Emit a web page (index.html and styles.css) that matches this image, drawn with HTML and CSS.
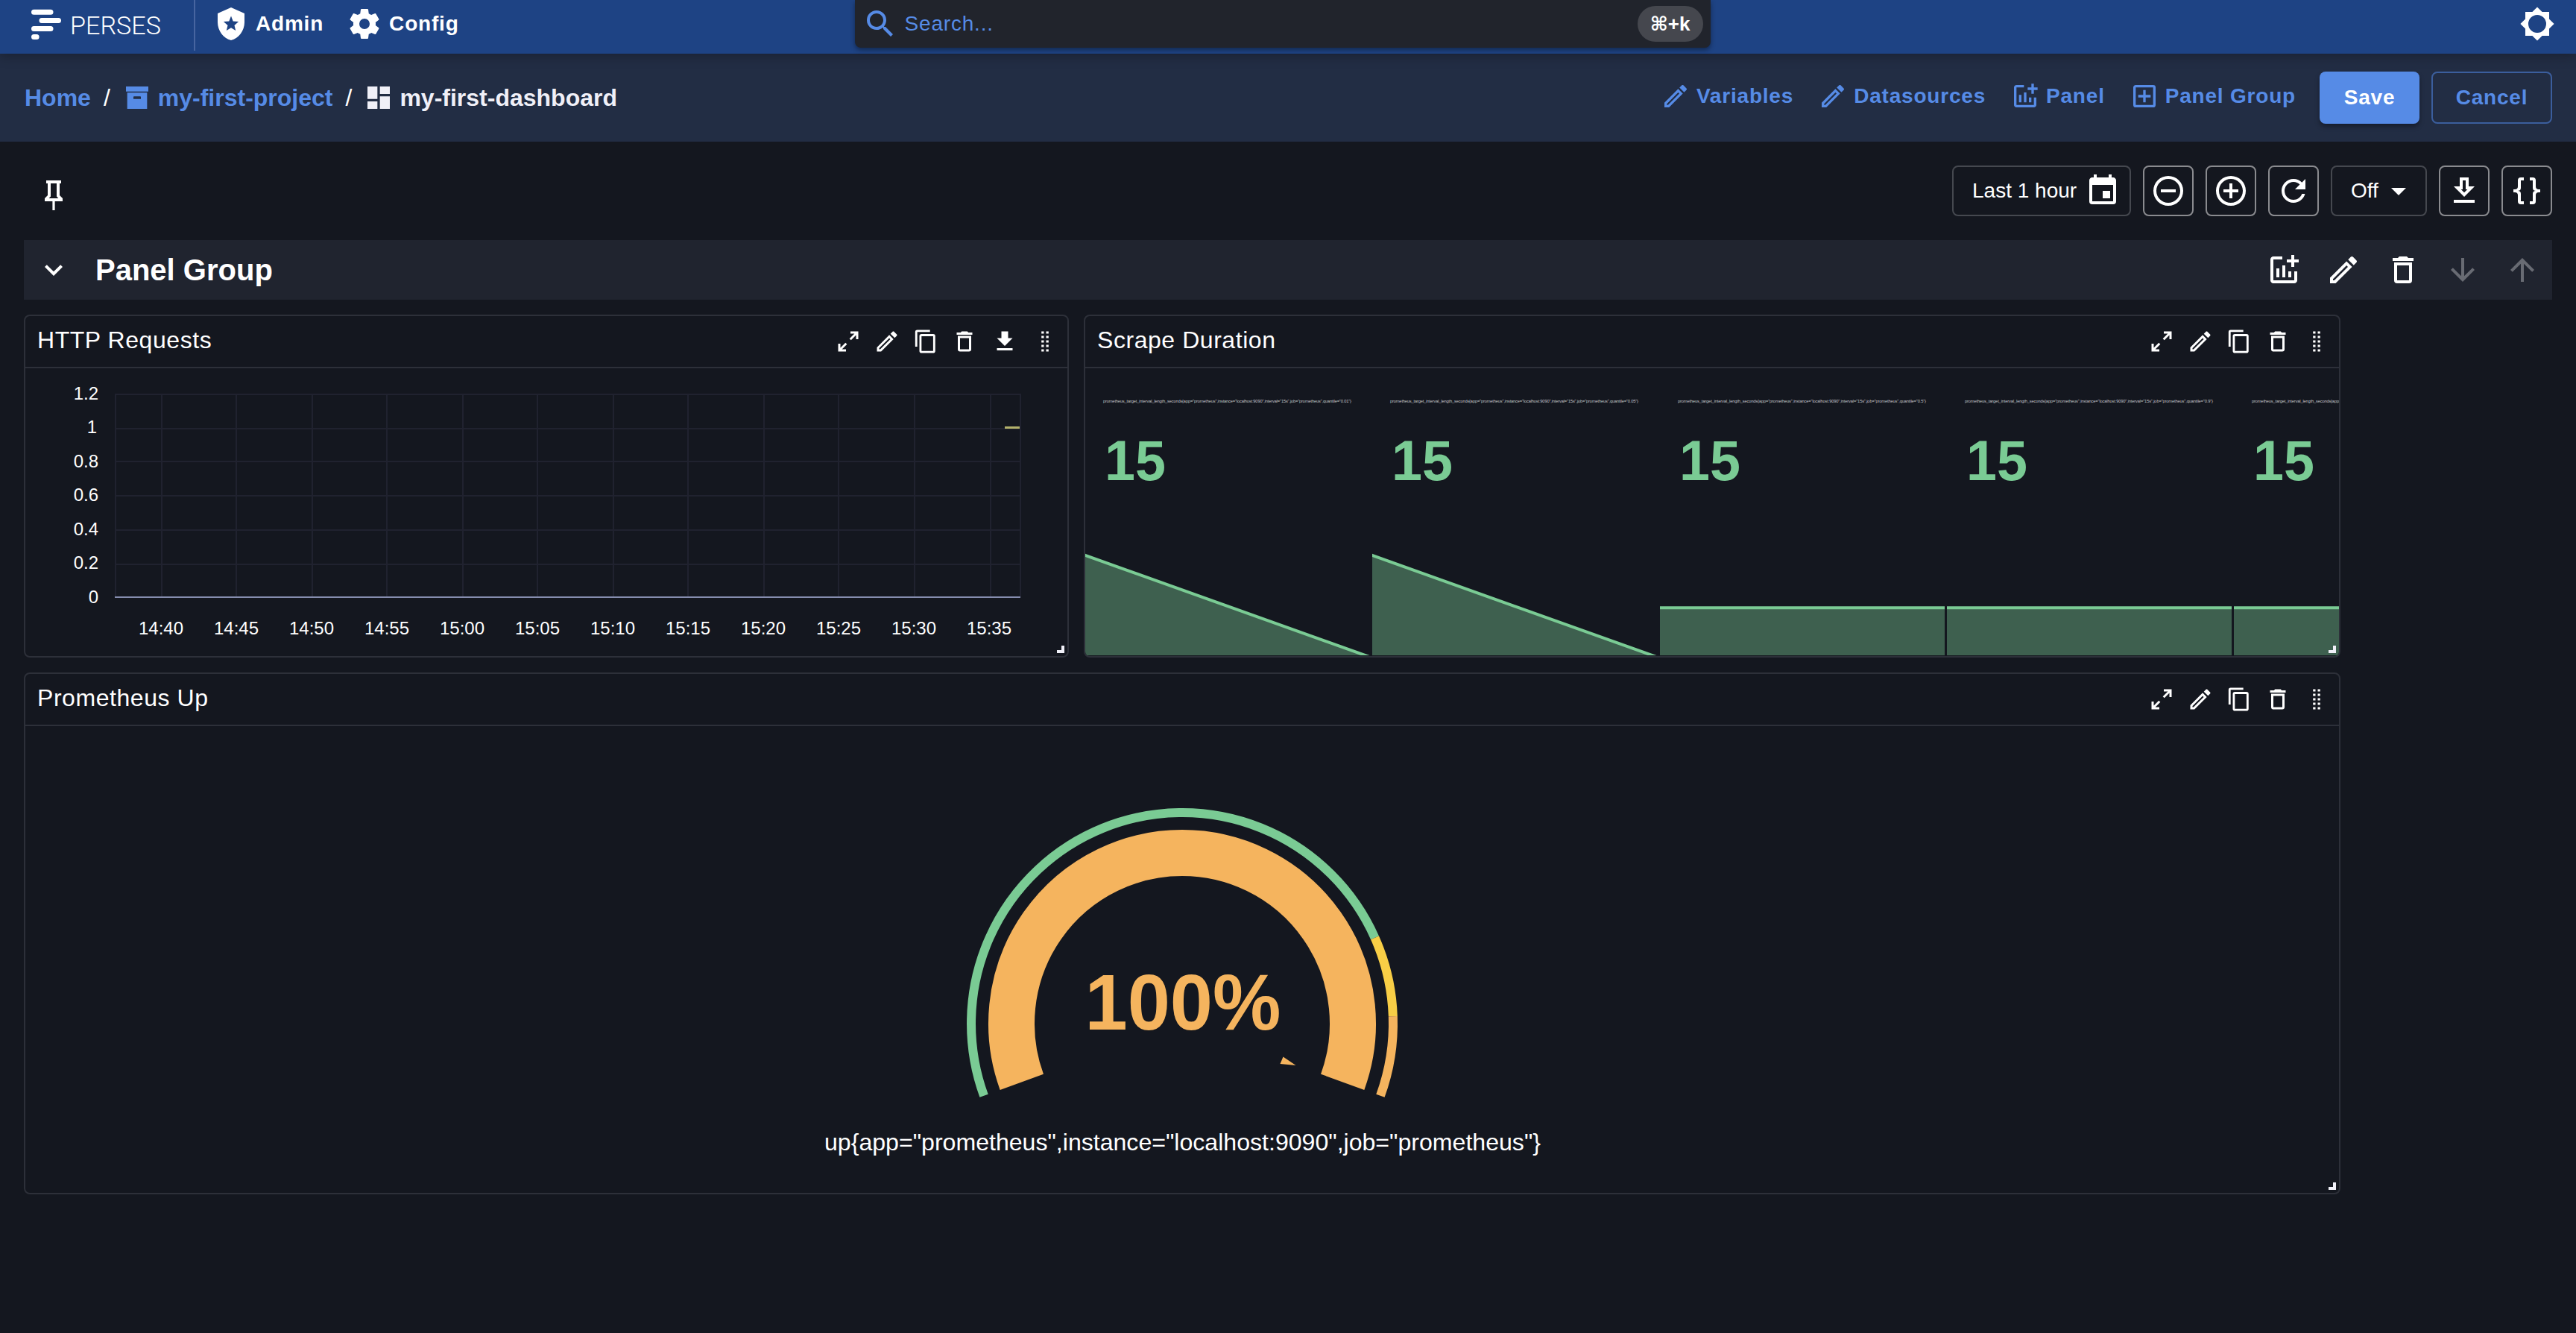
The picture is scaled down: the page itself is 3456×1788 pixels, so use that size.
FILE: index.html
```html
<!DOCTYPE html>
<html lang="en">
<head>
<meta charset="utf-8">
<title>my-first-dashboard</title>
<link rel="stylesheet" href="styles.css">
</head>
<body>
<svg class="defs" width="0" height="0" aria-hidden="true">
  <symbol id="i-shield" viewBox="0 0 24 24"><path fill-rule="evenodd" d="M12 1 3 5v6c0 5.55 3.84 10.74 9 12 5.16-1.26 9-6.45 9-12V5zM12 6.700l1.350 3.550 3.700.3-2.800 2.400.85 3.600L12 14.600 8.900 16.550l.85-3.600-2.800-2.400 3.700-.3z"/></symbol>
  <symbol id="i-gear" viewBox="0 0 24 24"><path d="M12,15.5A3.5,3.5 0 0,1 8.5,12A3.5,3.5 0 0,1 12,8.5A3.5,3.5 0 0,1 15.5,12A3.5,3.5 0 0,1 12,15.5M19.43,12.97C19.47,12.65 19.5,12.33 19.5,12C19.5,11.67 19.47,11.34 19.43,11L21.54,9.37C21.73,9.22 21.78,8.95 21.66,8.73L19.66,5.27C19.54,5.05 19.27,4.96 19.05,5.05L16.56,6.05C16.04,5.66 15.5,5.32 14.87,5.07L14.5,2.42C14.46,2.18 14.25,2 14,2H10C9.75,2 9.54,2.18 9.5,2.42L9.13,5.07C8.5,5.32 7.96,5.66 7.44,6.05L4.95,5.05C4.73,4.96 4.46,5.05 4.34,5.27L2.34,8.73C2.21,8.95 2.27,9.22 2.46,9.37L4.57,11C4.53,11.34 4.5,11.67 4.5,12C4.5,12.33 4.53,12.65 4.57,12.97L2.46,14.63C2.27,14.78 2.21,15.05 2.34,15.27L4.34,18.73C4.46,18.95 4.73,19.03 4.95,18.95L7.44,17.94C7.96,18.34 8.5,18.68 9.13,18.93L9.5,21.58C9.54,21.82 9.75,22 10,22H14C14.25,22 14.46,21.82 14.5,21.58L14.87,18.93C15.5,18.67 16.04,18.34 16.56,17.94L19.05,18.95C19.27,19.03 19.54,18.95 19.66,18.73L21.66,15.27C21.78,15.05 21.73,14.78 21.54,14.63L19.43,12.97Z"/></symbol>
  <symbol id="i-search" viewBox="0 0 24 24"><path d="M9.5,3A6.5,6.5 0 0,1 16,9.5C16,11.11 15.41,12.59 14.44,13.73L14.71,14H15.5L20.5,19L19,20.5L14,15.5V14.71L13.73,14.44C12.59,15.41 11.11,16 9.5,16A6.5,6.5 0 0,1 3,9.5A6.5,6.5 0 0,1 9.5,3M9.5,5C7,5 5,7 5,9.5C5,12 7,14 9.5,14C12,14 14,12 14,9.5C14,7 12,5 9.5,5Z"/></symbol>
  <symbol id="i-sun" viewBox="0 0 24 24"><path d="M12,18A6,6 0 0,1 6,12A6,6 0 0,1 12,6A6,6 0 0,1 18,12A6,6 0 0,1 12,18M20,15.31L23.31,12L20,8.69V4H15.31L12,0.69L8.69,4H4V8.69L0.69,12L4,15.31V20H8.69L12,23.31L15.31,20H20V15.31Z"/></symbol>
  <symbol id="i-archive" viewBox="0 0 24 24"><path d="M3,3H21V7H3V3M4,8H20V21H4V8M9.5,11A0.5,0.5 0 0,0 9,11.5V13H15V11.5A0.5,0.5 0 0,0 14.5,11H9.5Z"/></symbol>
  <symbol id="i-board" viewBox="0 0 24 24"><path d="M13,3V9H21V3M13,21H21V11H13M3,21H11V15H3M3,13H11V3H3V13Z"/></symbol>
  <symbol id="i-pencil" viewBox="0 0 24 24"><path d="M14.06,9L15,9.94L5.92,19H5V18.08L14.06,9M17.66,3C17.41,3 17.15,3.1 16.96,3.29L15.13,5.12L18.88,8.87L20.71,7.04C21.1,6.65 21.1,6 20.71,5.63L18.37,3.29C18.17,3.09 17.92,3 17.66,3M14.06,6.19L3,17.25V21H6.75L17.81,9.94L14.06,6.19Z"/></symbol>
  <symbol id="i-addchart" viewBox="0 0 24 24"><path d="M22 5v2h-3v3h-2V7h-3V5h3V2h2v3zm-3 14H5V5h6V3H5c-1.1 0-2 .9-2 2v14c0 1.1.9 2 2 2h14c1.1 0 2-.9 2-2v-6h-2zm-4-6v4h2v-4zm-4 4h2V9h-2zm-2 0v-6H7v6z"/></symbol>
  <symbol id="i-plusbox" viewBox="0 0 24 24"><path d="M19,19V5H5V19H19M19,3A2,2 0 0,1 21,5V19A2,2 0 0,1 19,21H5A2,2 0 0,1 3,19V5C3,3.89 3.9,3 5,3H19M11,7H13V11H17V13H13V17H11V13H7V11H11V7Z"/></symbol>
  <symbol id="i-calendar" viewBox="0 0 24 24"><path d="M19,19H5V8H19M16,1V3H8V1H6V3H5C3.89,3 3,3.89 3,5V19A2,2 0 0,0 5,21H19A2,2 0 0,0 21,19V5C21,3.89 20.1,3 19,3H18V1M17,12H12V17H17V12Z"/></symbol>
  <symbol id="i-minus" viewBox="0 0 24 24"><path d="M12,20C7.59,20 4,16.41 4,12C4,7.59 7.59,4 12,4C16.41,4 20,7.59 20,12C20,16.41 16.41,20 12,20M12,2A10,10 0 0,0 2,12A10,10 0 0,0 12,22A10,10 0 0,0 22,12A10,10 0 0,0 12,2M7,13H17V11H7"/></symbol>
  <symbol id="i-plus" viewBox="0 0 24 24"><path d="M12,20C7.59,20 4,16.41 4,12C4,7.59 7.59,4 12,4C16.41,4 20,7.59 20,12C20,16.41 16.41,20 12,20M12,2A10,10 0 0,0 2,12A10,10 0 0,0 12,22A10,10 0 0,0 22,12A10,10 0 0,0 12,2M13,7H11V11H7V13H11V17H13V13H17V11H13V7Z"/></symbol>
  <symbol id="i-refresh" viewBox="0 0 24 24"><path d="M17.65,6.35C16.2,4.9 14.21,4 12,4A8,8 0 0,0 4,12A8,8 0 0,0 12,20C15.73,20 18.84,17.45 19.73,14H17.65C16.83,16.33 14.61,18 12,18A6,6 0 0,1 6,12A6,6 0 0,1 12,6C13.66,6 15.14,6.69 16.22,7.78L13,11H20V4L17.65,6.35Z"/></symbol>
  <symbol id="i-caret" viewBox="0 0 24 24"><path d="M7,10L12,15L17,10H7Z"/></symbol>
  <symbol id="i-dl-outline" viewBox="0 0 24 24"><path d="M13,5V11H14.17L12,13.17L9.83,11H11V5H13M15,3H9V9H5L12,16L19,9H15V3M19,18H5V20H19V18Z"/></symbol>
  <symbol id="i-braces" viewBox="0 0 24 24"><path d="M8,3A2,2 0 0,0 6,5V9A2,2 0 0,1 4,11H3V13H4A2,2 0 0,1 6,15V19A2,2 0 0,0 8,21H10V19H8V14A2,2 0 0,0 6,12A2,2 0 0,0 8,10V5H10V3M16,3A2,2 0 0,1 18,5V9A2,2 0 0,0 20,11H21V13H20A2,2 0 0,0 18,15V19A2,2 0 0,1 16,21H14V19H16V14A2,2 0 0,1 18,12A2,2 0 0,1 16,10V5H14V3H16Z"/></symbol>
  <symbol id="i-pin" viewBox="0 0 24 24"><path d="M16,12V4H17V2H7V4H8V12L6,14V16H11.2V22H12.8V16H18V14L16,12M8.8,14L10,12.8V4H14V12.8L15.2,14H8.8Z"/></symbol>
  <symbol id="i-chevron" viewBox="0 0 24 24"><path d="M7.41,8.58L12,13.17L16.59,8.58L18,10L12,16L6,10L7.41,8.58Z"/></symbol>
  <symbol id="i-trash" viewBox="0 0 24 24"><path d="M6,19A2,2 0 0,0 8,21H16A2,2 0 0,0 18,19V7H6V19M8,9H16V19H8V9M15.5,4L14.5,3H9.5L8.5,4H5V6H19V4H15.5Z"/></symbol>
  <symbol id="i-down" viewBox="0 0 24 24"><path d="m20 12-1.41-1.41L13 16.17V4h-2v12.17l-5.58-5.59L4 12l8 8z"/></symbol>
  <symbol id="i-up" viewBox="0 0 24 24"><path d="m4 12 1.41 1.41L11 7.83V20h2V7.83l5.58 5.59L20 12l-8-8z"/></symbol>
  <symbol id="i-expand" viewBox="0 0 24 24"><path d="M10,21V19H6.41L10.91,14.5L9.5,13.09L5,17.59V14H3V21H10M14.5,10.91L19,6.41V10H21V3H14V5H17.59L13.09,9.5L14.5,10.91Z"/></symbol>
  <symbol id="i-copy" viewBox="0 0 24 24"><path d="M19,21H8V7H19M19,5H8A2,2 0 0,0 6,7V21A2,2 0 0,0 8,23H19A2,2 0 0,0 21,21V7A2,2 0 0,0 19,5M16,1H4A2,2 0 0,0 2,3V17H4V3H16V1Z"/></symbol>
  <symbol id="i-dl" viewBox="0 0 24 24"><path d="M5,20H19V18H5M19,9H15V3H9V9H5L12,16L19,9Z"/></symbol>
  <symbol id="i-drag" viewBox="0 0 24 24"><path d="M8.8 3h2.2v2H8.800zM13 3h2.2v2h-2.2zM8.800 7h2.2v2H8.800zM13 7h2.2v2h-2.2zM8.800 11h2.2v2H8.800zM13 11h2.2v2h-2.2zM8.800 15h2.2v2H8.800zM13 15h2.2v2h-2.2zM8.800 19h2.2v2H8.800zM13 19h2.2v2h-2.2z"/></symbol>
</svg>

<header class="nav">
  <div class="brand">
    <svg width="42" height="42" viewBox="0 0 42 42"><path class="mark" d="M4.500 4.300h22.500M15 15.600h22.500M4.500 26.600h22.500M4.500 37.500h3.600"/></svg>
    <svg class="wordmark" width="124" height="42" viewBox="0 0 124 42"><text x="-2" y="34" textLength="122" lengthAdjust="spacingAndGlyphs">PERSES</text></svg>
  </div>
  <a class="nav-link admin"><svg class="i48"><use href="#i-shield"/></svg><span>Admin</span></a>
  <a class="nav-link"><svg class="i48"><use href="#i-gear"/></svg><span>Config</span></a>
  <div class="search"><svg class="i48"><use href="#i-search"/></svg><span class="ph">Search...</span><span class="chip">⌘+k</span></div>
  <svg class="i48 theme"><use href="#i-sun"/></svg>
</header>

<div class="toolbar">
  <nav class="crumbs">
    <a>Home</a><i>/</i>
    <a><svg class="i40"><use href="#i-archive"/></svg><span>my-first-project</span></a><i>/</i>
    <b><svg class="i40"><use href="#i-board"/></svg><span>my-first-dashboard</span></b>
  </nav>
  <div class="actions">
    <a><svg class="i40"><use href="#i-pencil"/></svg>Variables</a>
    <a><svg class="i40"><use href="#i-pencil"/></svg>Datasources</a>
    <a><svg class="i40"><use href="#i-addchart"/></svg>Panel</a>
    <a><svg class="i40"><use href="#i-plusbox"/></svg>Panel Group</a>
  </div>
  <button class="save">Save</button>
  <button class="cancel">Cancel</button>
</div>

<main>
  <div class="controls">
    <svg class="i48 pin"><use href="#i-pin"/></svg>
    <div class="select time"><span>Last 1 hour</span><svg class="i48"><use href="#i-calendar"/></svg></div>
    <button class="sq"><svg class="i48"><use href="#i-minus"/></svg></button>
    <button class="sq"><svg class="i48"><use href="#i-plus"/></svg></button>
    <button class="sq"><svg class="i48"><use href="#i-refresh"/></svg></button>
    <div class="select off"><span>Off</span><svg class="i48"><use href="#i-caret"/></svg></div>
    <button class="sq"><svg class="i48"><use href="#i-dl-outline"/></svg></button>
    <button class="sq"><svg class="i48"><use href="#i-braces"/></svg></button>
  </div>

  <div class="group">
    <svg class="i48"><use href="#i-chevron"/></svg>
    <h2>Panel Group</h2>
    <div class="group-actions">
      <svg class="i48"><use href="#i-addchart"/></svg>
      <svg class="i48"><use href="#i-pencil"/></svg>
      <svg class="i48"><use href="#i-trash"/></svg>
      <svg class="i48 dim"><use href="#i-down"/></svg>
      <svg class="i48 dim"><use href="#i-up"/></svg>
    </div>
  </div>

  <div class="grid">
    <section class="panel http">
      <header><h3>HTTP Requests</h3><div class="tools"><svg><use href="#i-expand"/></svg><svg><use href="#i-pencil"/></svg><svg class="cp"><use href="#i-copy"/></svg><svg><use href="#i-trash"/></svg><svg class="dl"><use href="#i-dl"/></svg><svg><use href="#i-drag"/></svg></div></header>
      <svg class="body" width="1398" height="386" viewBox="34 494 1398 386">
        <g class="gridlines"><path d="M155 529H1369M155 575H1369M155 619H1369M155 665H1369M155 711H1369M155 757H1369"/><path d="M155 528V800M217 528V800M317 528V800M419 528V800M519 528V800M621 528V800M721 528V800M823 528V800M923 528V800M1025 528V800M1125 528V800M1227 528V800M1329 528V800M1369 528V800"/></g>
        <path class="axis" d="M154 801H1369"/>
        <path d="M1348 573.5H1368" stroke="#b3b16b" stroke-width="3"/>
        <g class="ylab"><text x="132" y="536">1.2</text><text x="130" y="581">1</text><text x="132" y="627">0.8</text><text x="132" y="672">0.6</text><text x="132" y="718">0.4</text><text x="132" y="763">0.2</text><text x="132" y="809">0</text></g>
        <g class="xlab"><text x="216" y="851">14:40</text><text x="317" y="851">14:45</text><text x="418" y="851">14:50</text><text x="519" y="851">14:55</text><text x="620" y="851">15:00</text><text x="721" y="851">15:05</text><text x="822" y="851">15:10</text><text x="923" y="851">15:15</text><text x="1024" y="851">15:20</text><text x="1125" y="851">15:25</text><text x="1226" y="851">15:30</text><text x="1327" y="851">15:35</text></g>
      </svg>
      <span class="grip"></span>
    </section>

    <section class="panel scrape">
      <header><h3>Scrape Duration</h3><div class="tools"><svg><use href="#i-expand"/></svg><svg><use href="#i-pencil"/></svg><svg class="cp"><use href="#i-copy"/></svg><svg><use href="#i-trash"/></svg><svg><use href="#i-drag"/></svg></div></header>
      <div class="stats">
        <svg width="382" height="385" viewBox="0 0 382 385"><text class="lbl" x="24" y="46" textLength="333">prometheus_target_interval_length_seconds{app="prometheus",instance="localhost:9090",interval="15s",job="prometheus",quantile="0.01"}</text><text class="num" x="26" y="150" textLength="82" lengthAdjust="spacingAndGlyphs">15</text><path class="area" d="M0 251 380 387H0z"/><path class="line" d="M-4 249.500 384 388"/></svg>
        <svg width="382" height="385" viewBox="0 0 382 385"><text class="lbl" x="24" y="46" textLength="333">prometheus_target_interval_length_seconds{app="prometheus",instance="localhost:9090",interval="15s",job="prometheus",quantile="0.05"}</text><text class="num" x="26" y="150" textLength="82" lengthAdjust="spacingAndGlyphs">15</text><path class="area" d="M0 251 380 387H0z"/><path class="line" d="M-4 249.500 384 388"/></svg>
        <svg width="382" height="385" viewBox="0 0 382 385"><text class="lbl" x="24" y="46" textLength="333">prometheus_target_interval_length_seconds{app="prometheus",instance="localhost:9090",interval="15s",job="prometheus",quantile="0.5"}</text><text class="num" x="26" y="150" textLength="82" lengthAdjust="spacingAndGlyphs">15</text><path class="area" d="M0 321H382V385H0z"/><path class="line" d="M0 321.200H382"/></svg>
        <svg width="382" height="385" viewBox="0 0 382 385"><text class="lbl" x="24" y="46" textLength="333">prometheus_target_interval_length_seconds{app="prometheus",instance="localhost:9090",interval="15s",job="prometheus",quantile="0.9"}</text><text class="num" x="26" y="150" textLength="82" lengthAdjust="spacingAndGlyphs">15</text><path class="area" d="M0 321H382V385H0z"/><path class="line" d="M0 321.200H382"/></svg>
        <svg width="382" height="385" viewBox="0 0 382 385"><text class="lbl" x="24" y="46" textLength="333">prometheus_target_interval_length_seconds{app="prometheus",instance="localhost:9090",interval="15s",job="prometheus",quantile="0.99"}</text><text class="num" x="26" y="150" textLength="82" lengthAdjust="spacingAndGlyphs">15</text><path class="area" d="M0 321H382V385H0z"/><path class="line" d="M0 321.200H382"/></svg>
      </div>
      <span class="grip"></span>
    </section>

    <section class="panel up">
      <header><h3>Prometheus Up</h3><div class="tools"><svg><use href="#i-expand"/></svg><svg><use href="#i-pencil"/></svg><svg class="cp"><use href="#i-copy"/></svg><svg><use href="#i-trash"/></svg><svg><use href="#i-drag"/></svg></div></header>
      <svg class="body" width="3104" height="626" viewBox="34 974 3104 626">
        <g transform="translate(1586 1373)" fill="none" stroke-width="12">
          <path stroke="#7acb94" d="M-265.930 96.790A283 283 0 0 1 258.530 -115.110"/>
          <path stroke="#f8ce46" d="M258.530 -115.110A283 283 0 0 1 282.830 -9.880"/>
          <path stroke="#f5b45e" d="M282.830 -9.880A283 283 0 0 1 265.930 96.790"/>
          <path stroke="#f5b45e" stroke-width="62" d="M-215.190 78.320A229 229 0 1 1 215.190 78.320"/>
          <path fill="#f5b45e" stroke="none" d="M135.500 44.500 152.500 56 131.500 54z"/>
        </g>
        <text class="pct" x="1587" y="1381" textLength="263" lengthAdjust="spacingAndGlyphs">100%</text>
        <text class="series" x="1106" y="1543" textLength="961" lengthAdjust="spacingAndGlyphs">up{app="prometheus",instance="localhost:9090",job="prometheus"}</text>
      </svg>
      <span class="grip"></span>
    </section>
  </div>
</main>
</body>
</html>
```
FILE: styles.css
```css
* { box-sizing: border-box; }
body {
  margin: 0;
  width: 3456px;
  min-height: 1788px;
  background: #14171f;
  color: #fff;
  font-family: "Liberation Sans", Arial, sans-serif;
  font-size: 28px;
}
svg { fill: currentColor; flex: none; display: block; }
.defs { position: absolute; }
.i48 { width: 48px; height: 48px; }
.i40 { width: 40px; height: 40px; }
button { font: inherit; background: none; color: inherit; padding: 0; margin: 0; }

/* top navigation */
.nav {
  position: relative;
  z-index: 1;
  height: 72px;
  display: flex;
  align-items: flex-start;
  background: #1e4384;
  box-shadow: 0 4px 14px rgba(0, 0, 0, .25);
}
.brand {
  width: 262px;
  height: 68px;
  padding: 12px 0 0 41px;
  display: flex;
  gap: 13px;
  border-right: 2px solid #4765a0;
}
.mark { fill: none; stroke: #fff; stroke-width: 7px; stroke-linecap: round; }
.wordmark text { font-family: Roboto, sans-serif; font-weight: 300; font-size: 33.500px; fill: #fff; }
.wordmark { overflow: visible; }
.nav-link {
  display: flex;
  align-items: center;
  gap: 9px;
  height: 48px;
  margin: 8px 0 0 32px;
  font-weight: 700;
  letter-spacing: .8px;
}
.nav-link.admin { margin-left: 24px; }
.nav-link:not(.admin) { margin-left: 31px; }
.nav-link span { line-height: 36px; padding-top: 0; }
.search {
  width: 1148px;
  height: 64px;
  margin-left: 531px;
  padding: 8px 10px 8px 10px;
  display: flex;
  align-items: center;
  background: #21242c;
  border-radius: 0 0 8px 8px;
  box-shadow: 0 3px 6px rgba(0, 0, 0, .4);
  color: #568be6;
}
.ph { margin-left: 9px; letter-spacing: .8px; }
.chip {
  margin-left: auto;
  width: 88px;
  height: 48px;
  line-height: 48px;
  text-align: center;
  border-radius: 24px;
  background: #45474e;
  color: #fff;
  font-weight: 700;
  font-size: 26px;
  font-family: "Liberation Sans", "DejaVu Sans", sans-serif;
}
.theme { margin: 8px 28px 0 auto; }

/* breadcrumb toolbar */
.toolbar {
  height: 118px;
  display: flex;
  align-items: center;
  padding: 0 32px 0 33px;
  background: #222d44;
}
.crumbs { display: flex; align-items: center; font-size: 32px; font-weight: 700; color: #568be6; }
.crumbs a, .crumbs b { display: flex; align-items: center; gap: 8px; }
.crumbs i { font-style: normal; font-weight: 400; color: #fff; margin: 0 16px 0 17px; }
.crumbs b { color: #f0f0f8; }
.actions {
  margin: 0 32px 4px auto;
  display: flex;
  gap: 33px;
  color: #568be6;
  font-weight: 700;
  letter-spacing: .8px;
}
.actions a { display: flex; align-items: center; gap: 8px; }
.save, .cancel { height: 70px; border-radius: 8px; font-weight: 700; letter-spacing: .8px; border: 0; }
.save { width: 134px; background: #568be6; box-shadow: 0 4px 6px rgba(0, 0, 0, .35); }
.cancel { width: 162px; margin-left: 16px; border: 2px solid #3b5e9d; color: #568be6; }

/* time range controls */
main { padding: 32px 32px 0; }
.controls { height: 68px; display: flex; align-items: center; gap: 16px; }
.pin { margin: 12px auto 0 16px; }
.select {
  height: 68px;
  display: flex;
  align-items: center;
  border: 2px solid #45484f;
  border-radius: 8px;
}
.time { width: 240px; padding-left: 25px; gap: 11px; }
.off { width: 129px; padding-left: 25px; gap: 3px; }
.sq {
  width: 68px;
  height: 68px;
  display: flex;
  align-items: center;
  justify-content: center;
  border: 2px solid #8a8b8f;
  border-radius: 8px;
}

/* panel group */
.group {
  height: 80px;
  margin-top: 32px;
  padding: 0 16px;
  display: flex;
  align-items: center;
  background: #20242f;
}
.group h2 { margin: 0 0 0 32px; font-size: 40px; line-height: 48px; }
.group-actions { margin-left: auto; display: flex; gap: 32px; }
.dim { color: #686b73; }

.grid {
  margin-top: 20px;
  display: grid;
  grid-template-columns: 1402px 1686px;
  grid-template-rows: 460px 700px;
  gap: 20px;
}
.panel {
  position: relative;
  overflow: hidden;
  border: 2px solid #2d3039;
  border-radius: 8px;
}
.up { grid-column: 1 / 3; }
.panel header {
  height: 70px;
  padding: 0 12px 0 16px;
  display: flex;
  align-items: center;
  border-bottom: 2px solid #2d3039;
}
.panel h3 { margin: 0 auto 4px 0; font-size: 32px; font-weight: 400; letter-spacing: .55px; }
.tools { display: flex; align-items: center; gap: 16px; }
.tools svg { width: 36px; height: 36px; }
.tools .cp { width: 34px; height: 34px; margin: 0 1px; }
.tools .dl { margin: 0 2px; }
.grip {
  position: absolute;
  right: 4px;
  bottom: 4px;
  width: 10px;
  height: 10px;
  border: solid #f0f0f8;
  border-width: 0 4px 4px 0;
}

/* time series chart */
.gridlines path { fill: none; stroke: #20222f; stroke-width: 2; }
.axis { stroke: #868daf; stroke-width: 2; }
.ylab, .xlab { font-size: 24px; }
.ylab { text-anchor: end; }
.xlab { text-anchor: middle; }

/* stat chart */
.stats { display: flex; gap: 3.300px; overflow: hidden; }
.lbl { font-size: 5.700px; fill: #c4c5c9; }
.num { font-size: 76px; font-weight: 700; fill: #7acb94; }
.area { fill: #3e604f; }
.line { fill: none; stroke: #7acb94; stroke-width: 4; }

/* gauge */
.pct { font-size: 105px; font-weight: 700; text-anchor: middle; fill: #f5b45e; }
.series { font-size: 32px; }
```
